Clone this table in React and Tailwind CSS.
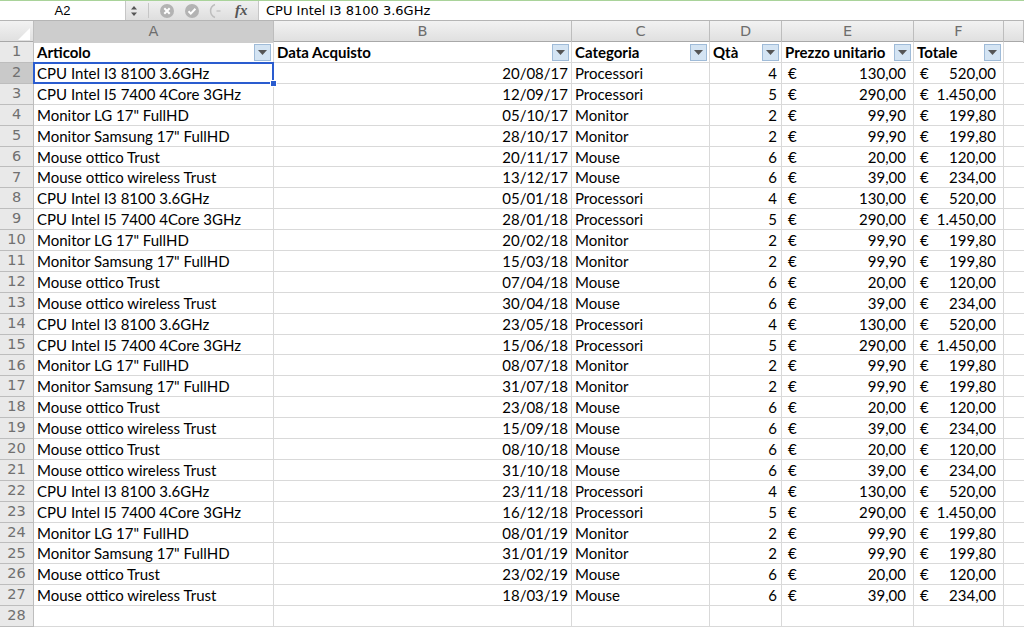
import React from "react";

const PRODUCTS = {
  i3: { name: "CPU Intel I3 8100 3.6GHz", cat: "Processori", qty: 4, price: "130,00", total: "520,00" },
  i5: { name: "CPU Intel I5 7400 4Core 3GHz", cat: "Processori", qty: 5, price: "290,00", total: "1.450,00" },
  lg: { name: 'Monitor LG 17" FullHD', cat: "Monitor", qty: 2, price: "99,90", total: "199,80" },
  sam: { name: 'Monitor Samsung 17" FullHD', cat: "Monitor", qty: 2, price: "99,90", total: "199,80" },
  mo: { name: "Mouse ottico Trust", cat: "Mouse", qty: 6, price: "20,00", total: "120,00" },
  mw: { name: "Mouse ottico wireless Trust", cat: "Mouse", qty: 6, price: "39,00", total: "234,00" },
};

const ROWS = [
  ["i3", "20/08/17"], ["i5", "12/09/17"], ["lg", "05/10/17"], ["sam", "28/10/17"],
  ["mo", "20/11/17"], ["mw", "13/12/17"], ["i3", "05/01/18"], ["i5", "28/01/18"],
  ["lg", "20/02/18"], ["sam", "15/03/18"], ["mo", "07/04/18"], ["mw", "30/04/18"],
  ["i3", "23/05/18"], ["i5", "15/06/18"], ["lg", "08/07/18"], ["sam", "31/07/18"],
  ["mo", "23/08/18"], ["mw", "15/09/18"], ["mo", "08/10/18"], ["mw", "31/10/18"],
  ["i3", "23/11/18"], ["i5", "16/12/18"], ["lg", "08/01/19"], ["sam", "31/01/19"],
  ["mo", "23/02/19"], ["mw", "18/03/19"],
];

const COLS = "grid grid-cols-[34px_240px_298px_138px_72px_132px_90px_1fr]";
const cell = "border-r border-b border-[#d9d9d9] h-[20.9px] leading-[20px] overflow-hidden whitespace-nowrap";

function FilterBtn() {
  return (
    <span className="w-[17px] h-[17px] bg-[#d4e4f3] border border-[#9fbbd8] flex items-center justify-center shrink-0">
      <svg width="9" height="5" viewBox="0 0 9 5"><path d="M0 0h9L4.5 5z" fill="#555" /></svg>
    </span>
  );
}

function HeadCell({ label }) {
  return (
    <div className={`${cell} h-[21px] font-bold flex items-center justify-between pl-[3px] pr-[2px]`}>
      <span>{label}</span>
      <FilterBtn />
    </div>
  );
}

function RowNum({ n, active }) {
  return (
    <div
      className={`border-r border-b border-[#bdbdbd] h-[20.9px] flex items-center justify-center text-[#707070] ${
        active ? "bg-[#c9c9c9]" : "bg-[#e9e9e9]"
      }`}
      style={{ fontFamily: '"DejaVu Sans", sans-serif', fontSize: 14.5 }}
    >
      {n}
    </div>
  );
}

function Euro({ v }) {
  return (
    <div className={`${cell} flex justify-between pl-[6px] pr-[7px]`}>
      <span>€</span>
      <span>{v}</span>
    </div>
  );
}

export default function App() {
  return (
    <div className="w-[1024px] h-[630px] overflow-hidden bg-white text-[15px] text-black" style={{ fontFamily: 'Lato, "Liberation Sans", sans-serif' }}>
      {/* formula bar */}
      <div className="h-[21px] border-t border-[#a9d39a] border-b border-b-[#b5b5b5] flex items-center bg-[#ececec]">
        <div className="w-[125px] h-full bg-white flex items-center justify-center text-[13px]" style={{ fontFamily: '"Liberation Sans", sans-serif' }}>
          A2
        </div>
        <div className="w-[133px] h-full flex items-center bg-gradient-to-b from-[#f0f0f0] to-[#dedede] border-l border-[#c6c6c6]">
          <svg width="12" height="14" viewBox="0 0 12 14" className="ml-[2px]">
            <path d="M3 5.5 6 2l3 3.5z M3 8.5 6 12l3-3.5z" fill="#555" />
          </svg>
          <div className="w-px h-[15px] bg-[#c6c6c6] ml-[8px]" />
          <svg width="16" height="16" viewBox="0 0 16 16" className="ml-[10px]">
            <circle cx="8" cy="8" r="7" fill="#b3b3b3" />
            <path d="M5.3 5.3l5.4 5.4M10.7 5.3l-5.4 5.4" stroke="#fff" strokeWidth="2" />
          </svg>
          <svg width="16" height="16" viewBox="0 0 16 16" className="ml-[9px]">
            <circle cx="8" cy="8" r="7" fill="#b3b3b3" />
            <path d="M4.5 8.3l2.3 2.3 4.6-4.8" stroke="#fff" strokeWidth="2" fill="none" />
          </svg>
          <svg width="18" height="18" viewBox="0 0 18 18" className="ml-[8px]">
            <path d="M7 2.5A7 7 0 0 0 7 15.5" stroke="#bdbdbd" strokeWidth="1.5" fill="none" />
            <path d="M8.5 9h4" stroke="#c4c4c4" strokeWidth="1.5" />
          </svg>
          <span className="ml-[9px] text-[15px] italic font-bold text-[#555]" style={{ fontFamily: '"Liberation Serif", serif' }}>
            fx
          </span>
        </div>
        <div className="flex-1 h-full bg-white border-l border-[#c6c6c6] flex items-center pl-[7px]" style={{ fontFamily: '"DejaVu Sans", sans-serif', fontSize: 13 }}>
          CPU Intel I3 8100 3.6GHz
        </div>
      </div>

      {/* column headers */}
      <div className={`${COLS} h-[21px] bg-gradient-to-b from-[#f2f2f2] to-[#e0e0e0] border-b border-[#a8a8a8] text-[#6d6d6d]`} style={{ fontFamily: '"DejaVu Sans", sans-serif', fontSize: 14.5 }}>
        <div className="border-r border-[#bdbdbd] flex items-end justify-end pr-[3px] pb-[3px]">
          <svg width="12" height="12" viewBox="0 0 12 12"><path d="M12 0v12H0z" fill="#fff" /></svg>
        </div>
        {["A", "B", "C", "D", "E", "F", ""].map((c, i) => (
          <div key={i} className={`border-r border-[#bdbdbd] flex items-center justify-center ${i === 0 ? "bg-[#cdcdcd]" : ""}`}>
            {c}
          </div>
        ))}
      </div>

      {/* row 1 */}
      <div className={COLS}>
        <RowNum n={1} />
        <HeadCell label="Articolo" />
        <HeadCell label="Data Acquisto" />
        <HeadCell label="Categoria" />
        <HeadCell label="Qtà" />
        <HeadCell label="Prezzo unitario" />
        <HeadCell label="Totale" />
        <div className={`${cell} h-[21px] border-r-0`} />
      </div>

      {ROWS.map(([k, date], i) => {
        const p = PRODUCTS[k];
        const n = i + 2;
        return (
          <div key={n} className={`${COLS} ${n === 2 ? "relative z-10" : ""}`}>
            <RowNum n={n} active={n === 2} />
            <div className={`${cell} pl-[3px] relative overflow-visible`}>
              {p.name}
              {n === 2 && (
                <>
                  <div className="absolute inset-[-1px] border-2 border-[#2a5ccf] pointer-events-none" />
                  <div className="absolute right-[-4px] bottom-[-4px] w-[7px] h-[7px] bg-[#2a5ccf] border border-white" />
                </>
              )}
            </div>
            <div className={`${cell} text-right pr-[3px]`}>{date}</div>
            <div className={`${cell} pl-[3px]`}>{p.cat}</div>
            <div className={`${cell} text-right pr-[4px]`}>{p.qty}</div>
            <Euro v={p.price} />
            <Euro v={p.total} />
            <div className={`${cell} border-r-0`} />
          </div>
        );
      })}

      <div className={COLS}>
        <RowNum n={28} />
        {[0, 1, 2, 3, 4, 5].map((i) => (
          <div key={i} className={cell} />
        ))}
        <div className={`${cell} border-r-0`} />
      </div>
    </div>
  );
}
